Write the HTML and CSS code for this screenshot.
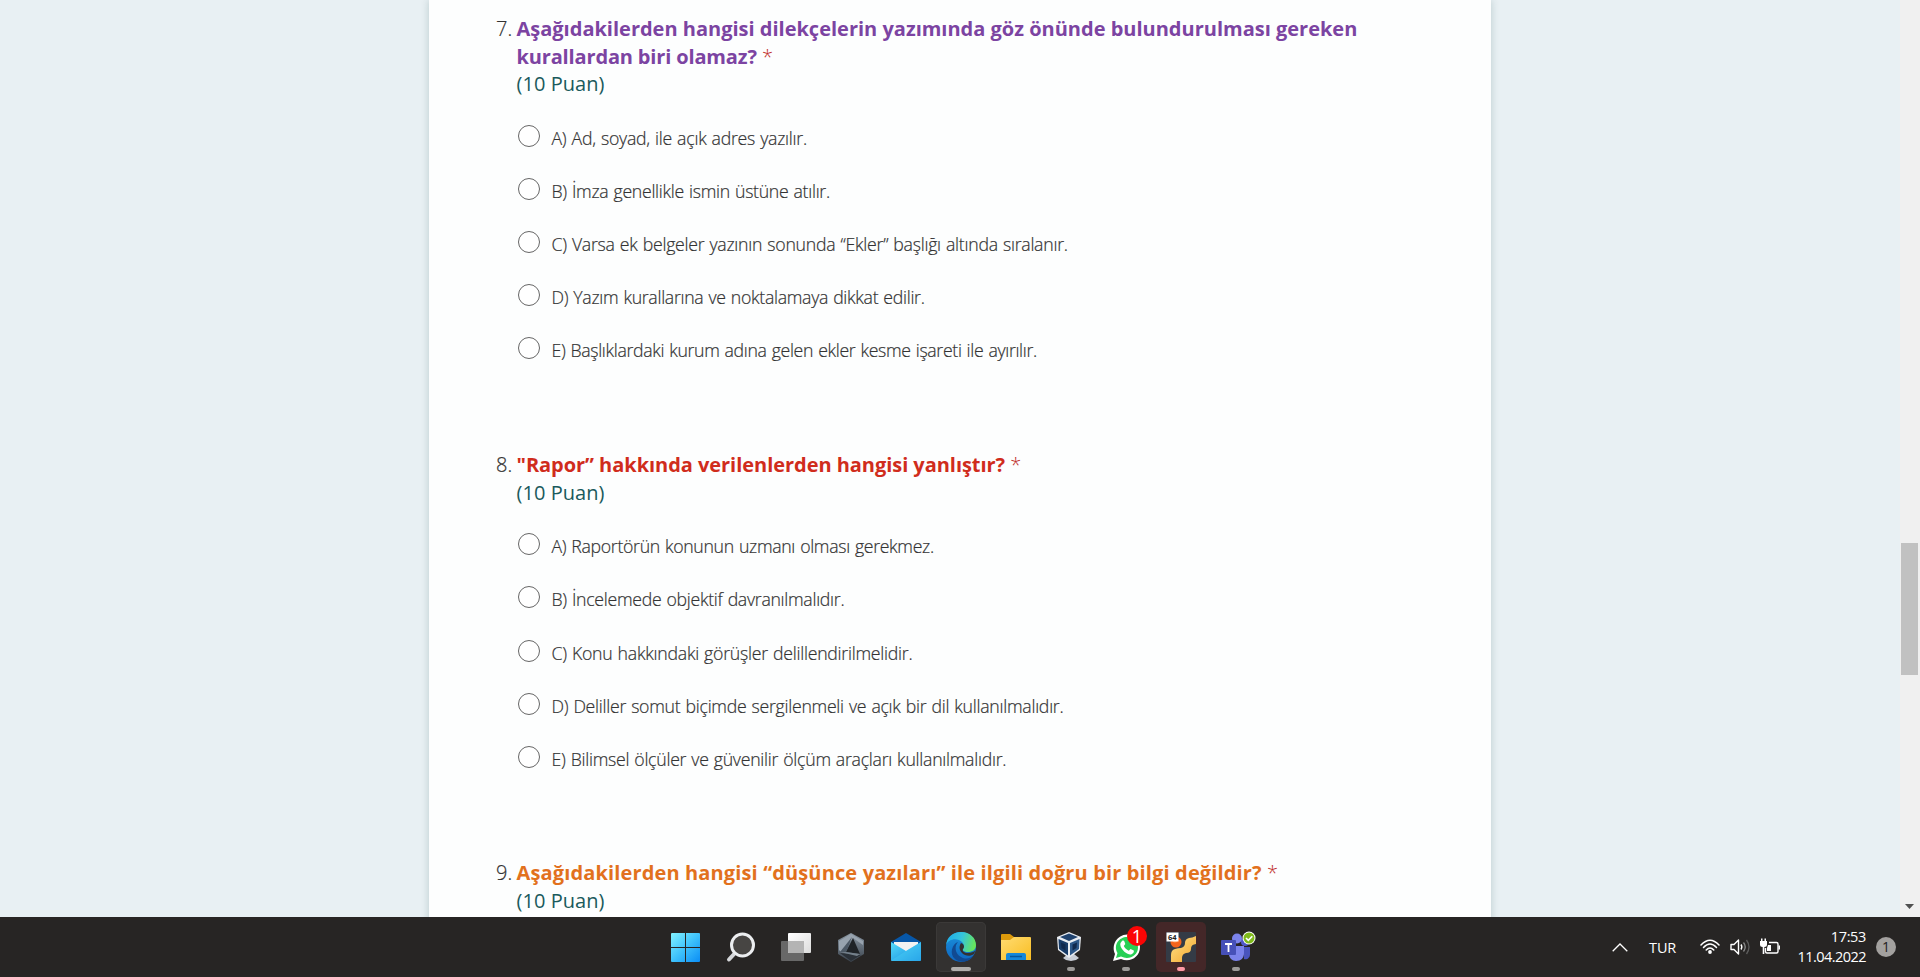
FILE: index.html
```html
<!DOCTYPE html>
<html lang="tr">
<head>
<meta charset="utf-8">
<title>Form</title>
<link rel="stylesheet" href="styles.css">
</head>
<body>
<div class="desktop">
  <main class="viewport">
    <div class="page">
      <form class="card">
        <section class="question">
          <span class="num">7.</span>
          <div class="body">
            <h2 class="title purple"><span class="t7a">Aşağıdakilerden hangisi dilekçelerin yazımında göz önünde bulundurulması gereken</span><br><span class="t7b">kurallardan biri olamaz?</span> <span class="req">*</span></h2>
            <p class="points">(10 Puan)</p>
            <ul class="options">
              <li><i class="radio"></i><span class="o7a">A) Ad, soyad, ile açık adres yazılır.</span></li>
              <li><i class="radio"></i><span class="o7b">B) İmza genellikle ismin üstüne atılır.</span></li>
              <li><i class="radio"></i><span class="o7c">C) Varsa ek belgeler yazının sonunda “Ekler” başlığı altında sıralanır.</span></li>
              <li><i class="radio"></i><span class="o7d">D) Yazım kurallarına ve noktalamaya dikkat edilir.</span></li>
              <li><i class="radio"></i><span class="o7e">E) Başlıklardaki kurum adına gelen ekler kesme işareti ile ayırılır.</span></li>
            </ul>
          </div>
        </section>
        <section class="question">
          <span class="num">8.</span>
          <div class="body">
            <h2 class="title red"><span class="t8">"Rapor” hakkında verilenlerden hangisi yanlıştır?</span> <span class="req">*</span></h2>
            <p class="points">(10 Puan)</p>
            <ul class="options">
              <li><i class="radio"></i><span class="o8a">A) Raportörün konunun uzmanı olması gerekmez.</span></li>
              <li><i class="radio"></i><span class="o8b">B) İncelemede objektif davranılmalıdır.</span></li>
              <li><i class="radio"></i><span class="o8c">C) Konu hakkındaki görüşler delillendirilmelidir.</span></li>
              <li><i class="radio"></i><span class="o8d">D) Deliller somut biçimde sergilenmeli ve açık bir dil kullanılmalıdır.</span></li>
              <li><i class="radio"></i><span class="o8e">E) Bilimsel ölçüler ve güvenilir ölçüm araçları kullanılmalıdır.</span></li>
            </ul>
          </div>
        </section>
        <section class="question">
          <span class="num">9.</span>
          <div class="body">
            <h2 class="title orange"><span class="t9">Aşağıdakilerden hangisi “düşünce yazıları” ile ilgili doğru bir bilgi değildir?</span> <span class="req">*</span></h2>
            <p class="points">(10 Puan)</p>
          </div>
        </section>
      </form>
    </div>
    <div class="scrollbar">
      <div class="thumb"></div>
      <svg class="arrow" width="9" height="5" viewBox="0 0 9 5"><path d="M0 0h9L4.500 5z" fill="#505050"/></svg>
    </div>
  </main>

  <footer class="taskbar">
    <nav class="apps">
      <div class="tile">
        <svg viewBox="0 0 50 50"><defs><linearGradient id="win" gradientUnits="userSpaceOnUse" x1="10" y1="11" x2="39" y2="40"><stop offset="0" stop-color="#82f3ff"/><stop offset=".5" stop-color="#3fc2fb"/><stop offset="1" stop-color="#0a8df5"/></linearGradient></defs>
        <path fill="url(#win)" d="M11 11h13v14H10V12q0-1 1-1zM25 11h13q1 0 1 1v13H25zM10 26h14v14H11q-1 0-1-1zM25 26h14v13q0 1-1 1H25z"/></svg>
      </div>
      <div class="tile">
        <svg viewBox="0 0 50 50"><path d="M19.500 30.500L13 37.500" stroke="#d5d7da" stroke-width="4" stroke-linecap="round"/><circle cx="26.500" cy="23" r="11" fill="#474543" stroke="#eceef0" stroke-width="3"/></svg>
      </div>
      <div class="tile">
        <svg viewBox="0 0 50 50"><defs><linearGradient id="tv" x1="0" y1="0" x2="1" y2="1"><stop offset="0" stop-color="#fff"/><stop offset="1" stop-color="#dcdcdc"/></linearGradient></defs>
        <rect x="10" y="19" width="23" height="20" rx="1" fill="#686868"/><rect x="17" y="11" width="23" height="20" rx="1" fill="url(#tv)"/><path d="M17 19h16v12H18q-1 0-1-1z" fill="#b4b4b4"/></svg>
      </div>
      <div class="tile">
        <svg viewBox="0 0 50 50"><defs><linearGradient id="ar" x1="0" y1="0" x2="0" y2="1"><stop offset="0" stop-color="#8a97a3"/><stop offset="1" stop-color="#39424c"/></linearGradient></defs>
        <path d="M25 11l13 7v14l-13 8-13-8V18z" fill="url(#ar)"/><path d="M25 12l12 7v4l-10-7-12 14-2-2v-9z" fill="#98a3ae"/><path d="M27 16l7 16-14-2z" fill="#1f2327"/><path d="M26 15l-12 15 6 0z" fill="#4d5965"/><path d="M14 31l21 2-10 6z" fill="#2b3138"/><path d="M14 30l6 0 14 2-3 2z" fill="#74808b"/></svg>
      </div>
      <div class="tile">
        <svg viewBox="0 0 50 50"><defs><linearGradient id="ml" x1="0" y1="0" x2="1" y2="1"><stop offset="0" stop-color="#55dcfa"/><stop offset="1" stop-color="#1187e0"/></linearGradient></defs>
        <path d="M10 20l15-9 15 9v10H10z" fill="#0757a8"/><path d="M13 20h24v9H13z" fill="#f2f2f2"/><path d="M10 20l15 9 15-9v18q0 1-1 1H11q-1 0-1-1z" fill="url(#ml)"/><path d="M10 38.500L25 29l15-9v18q0 1-1 1H11z" fill="#46ccf5" opacity=".45"/></svg>
      </div>
      <div class="tile active">
        <svg viewBox="0 0 50 50"><defs><linearGradient id="ed" x1="0" y1=".3" x2="1" y2=".5"><stop offset="0" stop-color="#1faee8"/><stop offset=".5" stop-color="#35c4dc"/><stop offset="1" stop-color="#68e657"/></linearGradient><linearGradient id="ed2" x1="0" y1="0" x2="0" y2="1"><stop offset="0" stop-color="#1b92dc"/><stop offset="1" stop-color="#0e66c0"/></linearGradient></defs>
        <circle cx="25" cy="25" r="15" fill="url(#ed2)"/><path d="M10 23C11 15 17 10 25 10c9 0 15 6 15 13 0 5-4 7-8 7-4 0-6-2-5-3 2-2 1-7-4-9-5-2-11 0-13 5z" fill="url(#ed)"/><path d="M22 20c-4 4-3 12 3 15 5 3 10 1 13-2-4 7-13 9-19 4-6-5-3-15 3-17z" fill="#114a92"/><path d="M25 21c3 1 4 4 2 6-1 2 1 4 5 4 3 0 6-1 7.500-2.500L38 32c-4 3-9 2-12-1-3-3-3-7-1-10z" fill="#333130"/></svg>
        <b class="mark wide"></b>
      </div>
      <div class="tile">
        <svg viewBox="0 0 50 50"><defs><linearGradient id="fo" x1="0" y1="0" x2="1" y2="1"><stop offset="0" stop-color="#ffdc72"/><stop offset="1" stop-color="#f9bd22"/></linearGradient></defs>
        <path d="M10 13q0-1 1-1h8l4 3h15q1 0 1 1v10H10z" fill="#dd9a0b"/><path d="M10 18h9l4-3h16q1 0 1 1v22H10z" fill="url(#fo)"/><path d="M15 38v-5q0-2 2-2h16q2 0 2 2v5z" fill="#1687d9"/><path d="M19 34.500h12" stroke="#07579c" stroke-width="1.500"/></svg>
      </div>
      <div class="tile">
        <svg viewBox="0 0 50 50"><path d="M17 36l5-4h6l5 4-3 2-5 1-5-1z" fill="#c9ced6"/><path d="M23 10l12 5-1 13-11 8-11-8-1-13z" fill="#e9edf2"/><path d="M23 11.500l9 3.500-9 4-9-4z" fill="#20436f"/><path d="M12.500 17l9.500 4v12.500l-9-6.500z" fill="#183c68"/><path d="M33.500 17L24 21v12.500l9-6.500z" fill="#2c5788"/><path d="M15 20.500l4.500 2v6L15.500 26zM31 20.500l-4.500 2v6l4-2.500z" fill="#10294d"/></svg>
        <b class="mark"></b>
      </div>
      <div class="tile">
        <svg viewBox="0 0 50 50"><path d="M12 39l2-7C10 23 16 13 26 12.500c8 0 13 6 13 12.500 0 10-10 16-19 12z" fill="#fff"/><path d="M15 36l1.500-5C12 23 18 15 26 15c7 0 11 5 11 10.500 0 8-9 13-17 9z" fill="#27cf55"/><path d="M21 19c1-.8 2-.5 2.300.3l1 2.700-1.500 2c1 2.300 2.700 3.700 5 4.700l1.700-1.800 3.300 1.600c.5 2-1.500 4-3.800 4C24 32 18 25 19.500 21z" fill="#fff"/></svg>
        <span class="count">1</span>
        <b class="mark"></b>
      </div>
      <div class="tile alert">
        <svg viewBox="0 0 50 50"><defs><linearGradient id="px" x1="0" y1="0" x2="1" y2="1"><stop offset="0" stop-color="#ffe28a"/><stop offset="1" stop-color="#f2a52c"/></linearGradient></defs>
        <rect x="10" y="10" width="30" height="30" rx="1" fill="#343b46"/><path d="M40 14q-4 2-7 2-4 1-4 5 0 4-4 5-3 0-6 1-4 1-4 6v7H26v-4q0-4 4-5 5 0 5-4 0-4 3-4.500l2-.5z" fill="url(#px)"/><circle cx="20" cy="20" r="5.500" fill="#f4641d"/><circle cx="19" cy="18" r="2.500" fill="#ff9951"/><rect x="10.500" y="10.500" width="12" height="9" fill="#fff"/><text x="12" y="18" class="tiny">64</text></svg>
        <b class="mark pink"></b>
      </div>
      <div class="tile">
        <svg viewBox="0 0 50 50"><circle cx="34" cy="20" r="4" fill="#5059c9"/><path d="M32 25h7v7c0 4-3 6-6 5z" fill="#4954bd"/><circle cx="26" cy="16.500" r="5" fill="#7b83eb"/><path d="M18 24h15v7c0 5-3 8-8 8-4 0-7-3-7-7z" fill="#7b83eb"/><rect x="10" y="18" width="15" height="15" rx="1" fill="#4650b8"/><path d="M14 22h7M17.500 22v8" stroke="#fff" stroke-width="1.800"/><circle cx="38" cy="16" r="6.500" fill="#fff"/><circle cx="38" cy="16" r="5.500" fill="#7fba1c"/><path d="M35 16l2.300 2.300 4-4" fill="none" stroke="#fff" stroke-width="1.600"/></svg>
        <b class="mark"></b>
      </div>
    </nav>
    <div class="tray">
      <svg class="chev" width="16" height="9" viewBox="0 0 16 9"><path d="M.7 8.300L8 1l7.300 7.300" fill="none" stroke="#fff" stroke-width="1.300"/></svg>
      <span class="lang">TUR</span>
      <svg class="wifi" width="20" height="16" viewBox="0 0 20 16"><g fill="none" stroke="#fff" stroke-width="1.500" stroke-linecap="round"><path d="M1 6Q10-3.500 19 6"/><path d="M3.500 8.500Q10 1.500 16.500 8.500"/><path d="M6.200 11Q10 6.800 13.800 11"/></g><circle cx="10" cy="13" r="1.900" fill="#fff"/></svg>
      <svg class="sound" width="21" height="18" viewBox="0 0 21 18"><path d="M1 6.500h3l4.500-4.500v14L4 11.500H1z" fill="none" stroke="#fff" stroke-width="1.400" stroke-linejoin="round"/><path d="M11 6.500q1.700 2.500 0 5" fill="none" stroke="#fff" stroke-width="1.400"/><path d="M13.500 4.500q3.500 4.500 0 9" fill="none" stroke="#888" stroke-width="1.300"/><path d="M16.500 2q5 7 0 14" fill="none" stroke="#5c5c5c" stroke-width="1.300"/></svg>
      <svg class="battery" width="21" height="18" viewBox="0 0 21 18"><path d="M9 4.500h7.500q1.500 0 1.500 1.500v7.500q0 1.500-1.500 1.500H7q-1.500 0-1.500-1.500V10" fill="none" stroke="#fff" stroke-width="1.400"/><path d="M18.500 7.500H20v4h-1.500zM0 3h7v3.500Q7 9 4.300 9v7H2.700V9Q0 9 0 6.500zM1 .5h1.500V3H1zM4.500.5H6V3H4.500z" fill="#fff"/><path d="M8 7h3v6H7v-3z" fill="#fff"/></svg>
      <div class="clock"><span class="time">17:53</span><span>11.04.2022</span></div>
      <span class="note">1</span>
    </div>
  </footer>
</div>
</body>
</html>
```

FILE: styles.css
```css
* { box-sizing: border-box; }
body { margin: 0; font-family: "Open Sans", "Noto Sans", sans-serif; }
.desktop { width: 1920px; height: 977px; display: flex; flex-direction: column; overflow: hidden; }

.viewport { height: 917px; display: flex; background: #e8f0f3; overflow: hidden; }
.page { flex: 1; padding-left: 429px; }
.card { width: 1062px; height: 940px; padding: 15px 0 0 67px; background: #fdfefe; box-shadow: 0 0 8px rgba(0, 60, 60, .2); }
.question { display: flex; width: 920px; margin-bottom: 60.4px; }
.num { width: 20.5px; font-size: 20px; line-height: 28px; color: #333; font-weight: 300; -webkit-text-stroke: .2px #333; }
.title { margin: 0; font-size: 20px; line-height: 27.7px; font-weight: 700; white-space: nowrap; }
.purple { color: #7c44a2; }
.red { color: #d02c1c; }
.orange { color: #e2711d; }
.t7b { letter-spacing: -.15px; }
.t8 { letter-spacing: -.04px; }
.t9 { letter-spacing: .14px; }
.req { color: #c0302c; font-weight: 300; margin-left: 0; }
.points { margin: 0; font-size: 20px; line-height: 27.7px; color: #1a5a5c; font-weight: 400; letter-spacing: .05px; }
.options { list-style: none; margin: 27px 0 0; padding: 0 0 0 1px; }
.options li { display: flex; height: 53.1px; white-space: nowrap; font-size: 17.7px; font-weight: 300; line-height: 27.4px; color: #333; -webkit-text-stroke: .2px #333; word-spacing: .8px; }
.o7a { letter-spacing: -.25px; }
.o7b { letter-spacing: -.29px; }
.o7c { letter-spacing: -.26px; }
.o7d { letter-spacing: -.3px; }
.o7e { letter-spacing: -.33px; }
.o8a { letter-spacing: -.32px; }
.o8b { letter-spacing: -.29px; }
.o8c { letter-spacing: -.25px; }
.o8d { letter-spacing: -.27px; }
.o8e { letter-spacing: -.27px; }
.radio { width: 22px; height: 22px; margin-right: 12px; border: 1.3px solid #666; border-radius: 50%; background: #fff; }

.scrollbar { width: 20px; padding: 543px 2px 8px 1px; background: #f0f0f0; display: flex; flex-direction: column; align-items: center; justify-content: space-between; }
.thumb { width: 17px; height: 132px; background: #c1c1c1; }
.arrow { display: block; }

.taskbar { height: 60px; background: #272524; display: flex; justify-content: space-between; }
.apps { display: flex; gap: 5px; padding: 5px 0 0 661px; }
.tile { position: relative; width: 50px; height: 50px; border-radius: 5px; }
.tile svg { display: block; width: 50px; height: 50px; }
.active { background: #333130; box-shadow: inset 0 0 0 1px #3b3938; }
.alert { background: #442728; }
.mark { position: absolute; left: 21px; top: 45px; width: 8px; height: 4px; border-radius: 2px; background: #9c9a98; }
.wide { left: 15px; width: 20px; background: #b0aeac; }
.pink { background: #ff99a4; }
.count { position: absolute; left: 26px; top: 4px; width: 20px; height: 20px; border-radius: 50%; background: #fb0505; color: #fff; font: 18px/20px "Open Sans", sans-serif; text-align: center; }
.tiny { font: 700 7.5px "Open Sans", sans-serif; fill: #222; }

.tray { display: flex; align-items: center; color: #fff; padding-right: 24px; }
.chev { margin-right: 21px; }
.lang { width: 28px; font-size: 14.5px; letter-spacing: -.1px; margin-right: 23px; }
.wifi { margin-right: 10px; }
.sound { margin-right: 9px; }
.battery { margin-right: 17px; }
.clock { width: 68px; display: flex; flex-direction: column; align-items: flex-end; font-size: 14.5px; line-height: 20px; letter-spacing: -.55px; }
.time { letter-spacing: -.35px; }
.note { width: 20px; height: 20px; margin-left: 10px; border-radius: 50%; background: #a3a19f; color: #222; font-size: 14px; line-height: 20px; text-align: center; }
```
